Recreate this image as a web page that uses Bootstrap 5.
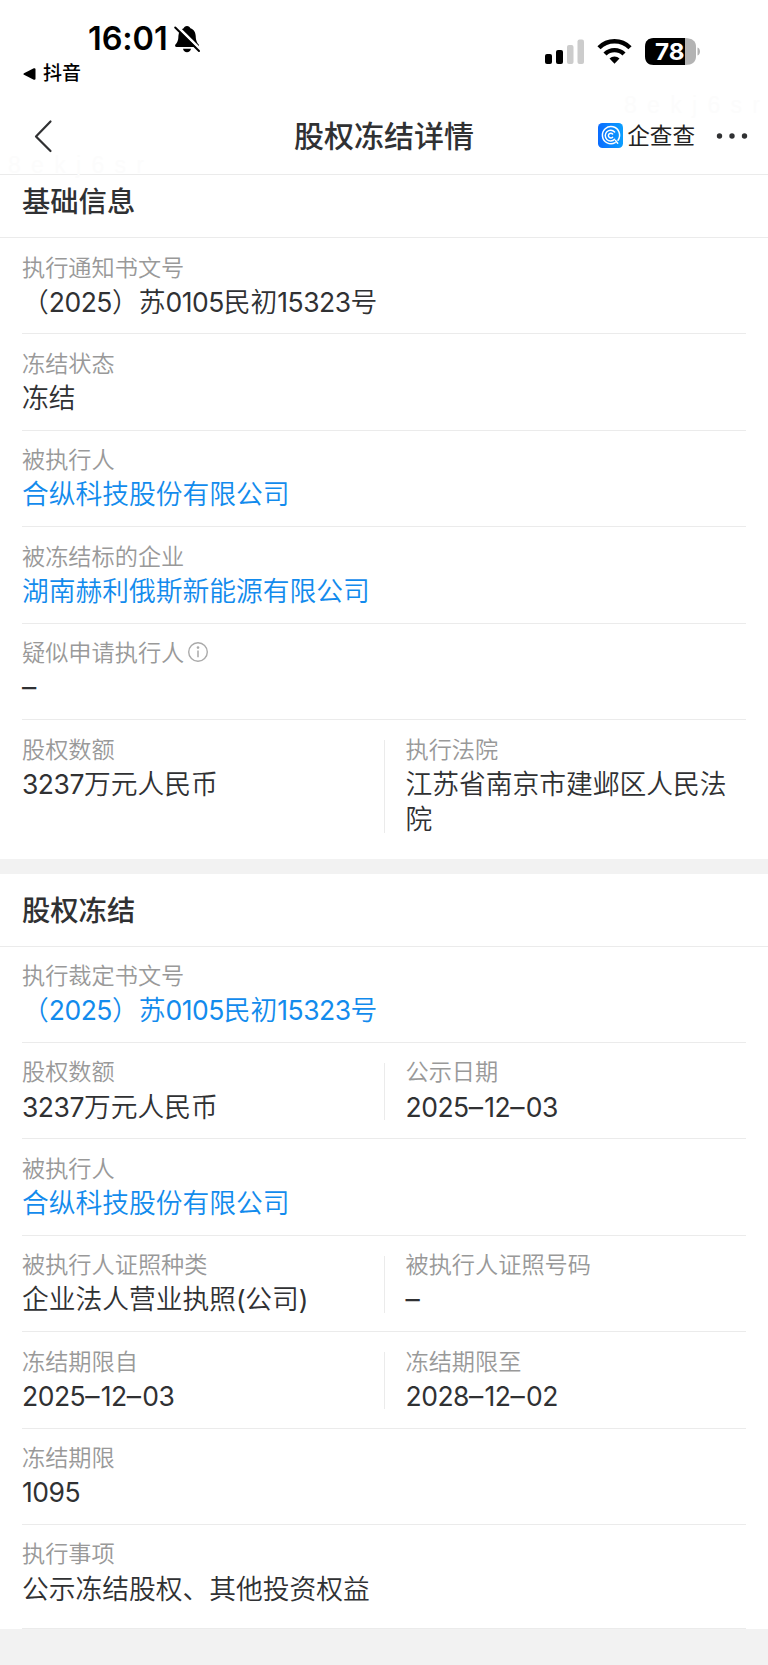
<!DOCTYPE html>
<html lang="zh-CN">
<head>
<meta charset="utf-8">
<meta name="viewport" content="width=device-width, initial-scale=1">
<title>股权冻结详情</title>
<link href="https://cdn.jsdelivr.net/npm/bootstrap@5.3.0/dist/css/bootstrap.min.css" rel="stylesheet">
<style>
  body { font-family: Inter, "Noto Sans CJK SC", sans-serif; color: #303133; background: #f2f2f2; }
  svg { display: block; flex: none; }
  .status-bar { height: 92px; color: #000; }
  .clock { font-size: 32.5px; font-weight: 600; line-height: 40px; letter-spacing: -.1px; padding: 19px 0 0 88px; }
  .bell { margin: 0 0 0 5px; }
  .back-app { font-size: 19px; font-weight: 500; line-height: 24px; padding: 3px 0 0 23px; }
  .status-icons { padding: 38px 68px 0 0; }
  .title-bar { height: 83px; border-bottom: 1px solid #ebebeb; padding: 0 20px 0 34px; }
  .page-title { font-size: 30px; font-weight: 500; line-height: 40px; top: 24px; }
  .nav-item-shift { margin-top: 5px; }
  .brand-name { font-size: 22.6px; line-height: 26px; margin: 0 21px 0 4px; color: #222; }
  .wm { font-family: "Liberation Sans", sans-serif; font-size: 23px; line-height: 26px; letter-spacing: 10.300px; color: #fcfcfc; }
  .wm-left { left: 8px; top: 152px; }
  .wm-right { left: 624px; top: 92px; }
  .sec-head { border-bottom: 1px solid #ebebeb; padding-left: 22px; font-size: 28.3px; font-weight: 500; line-height: 36px; height: 73px; padding-top: 19px; }
  .sec-head.tucked { height: 63px; padding-top: 9px; }
  .entries { padding: 0 22px; }
  .entry { height: 96.42px; border-bottom: 1px solid #ebebeb; }
  .entry.tall { height: 139px; border-bottom: 0; }
  .entry.final { height: 104px; }
  .cell { flex: 0 0 50%; padding-top: 13.500px; }
  .cell + .cell { padding-left: 21.500px; position: relative; }
  .cell + .cell::before { content: ""; position: absolute; left: 0; top: 20px; bottom: 18.5px; width: 1px; background: #ebebeb; }
  .tall .cell + .cell::before { bottom: 26px; }
  .lbl { font-size: 23.2px; line-height: 32.5px; color: #999; font-weight: 350; }
  .val { font-size: 26.75px; line-height: 35.5px; padding-top: .6px; font-weight: 350; }
  .val b { font-weight: 400; font-size: 26.5px; letter-spacing: -.5px; }
  .val i { font-style: normal; font-size: 28.500px; line-height: 1; letter-spacing: 1.300px; }
  .val.lk { color: #128bed; }
  .gap-band { height: 14.5px; background: #f2f2f2; }
</style>
</head>
<body>
<div class="bg-white position-relative">
  <div class="status-bar d-flex justify-content-between">
    <div>
      <div class="clock d-flex align-items-center"><span>16:01</span>
        <svg class="bell" width="28" height="30" viewBox="0 0 28 30">
          <path d="M14 2c1.800 0 3 1 3.400 2.300C21 5.500 22.500 8.500 22.700 12c.2 5 1.300 6.500 2.800 8.300.9 1.200.6 2.700-1 2.700H3.600c-1.600 0-2-1.500-1-2.700C4.200 18.500 5.300 17 5.400 12c.2-3.500 1.800-6.500 5.200-7.700C11 3 12.200 2 14 2zM10 24.800h8c-.4 2.200-2 3.400-4 3.400s-3.600-1.200-4-3.400z" fill="#000"/>
          <path d="M3.700 2 27.500 25.500" stroke="#fff" stroke-width="3"/>
          <path d="M2.200 3.500 26 27" stroke="#000" stroke-width="2" stroke-linecap="round"/>
        </svg>
      </div>
      <div class="back-app d-flex align-items-center">
        <svg width="14" height="14" viewBox="0 0 14 14"><path d="M1 6.200Q-.2 7 1 7.800L10.800 12.700Q12.500 13.300 12.500 11.600V2.400Q12.500.7 10.800 1.300z" fill="#000"/></svg>
        <span style="margin-left:6px">抖音</span>
      </div>
    </div>
    <div class="status-icons d-flex">
      <svg width="157" height="28" viewBox="0 0 157 28">
        <g fill="#000"><rect x="2" y="16" width="7" height="10" rx="2"/><rect x="13" y="12" width="7" height="14" rx="2"/></g>
        <g fill="#ccc"><rect x="24" y="7" width="6.500" height="19" rx="2"/><rect x="34.500" y="1.500" width="6.500" height="24.500" rx="2"/></g>
        <g fill="none" stroke="#000" stroke-width="4.400"><path d="M56 9.800a21.500 21.500 0 0 1 31 0"/><path d="M62 16a13.500 13.500 0 0 1 19 0"/></g>
        <path d="M66.500 20.500a7.500 7.500 0 0 1 10 0L71.500 25.700z" fill="#000"/>
        <path d="M110.500 0h31.500v27h-31.500c-5.500 0-8.500-3.500-8.500-8.500v-10c0-5 3-8.500 8.500-8.500z" fill="#000"/>
        <path d="M142 0c7.500 0 11 3.500 11 8.500v10c0 5-3.500 8.500-11 8.500z" fill="#b3b3b3"/>
        <path d="M154.500 9.500c3.300 1 3.300 7 0 8z" fill="#b3b3b3"/>
        <text x="112" y="22" font-size="23.500" font-weight="700" font-family="Inter, sans-serif" fill="#fff" textLength="29.500" lengthAdjust="spacingAndGlyphs">78</text>
      </svg>
    </div>
  </div>

  <nav class="title-bar d-flex align-items-center position-relative">
    <svg class="nav-item-shift" width="20" height="34" viewBox="0 0 20 34"><path d="M16.500 2.500 2 17.500 16.500 32" fill="none" stroke="#303133" stroke-width="2.200" stroke-linecap="round" stroke-linejoin="round"/></svg>
    <div class="page-title position-absolute start-0 end-0 text-center">股权冻结详情</div>
    <div class="nav-item-shift d-flex align-items-center ms-auto">
      <svg width="25" height="25" viewBox="0 0 25 25">
        <defs><linearGradient id="lg" x1="0" y1="0" x2="1" y2="0"><stop offset="0" stop-color="#0a6cff"/><stop offset="1" stop-color="#0b9fff"/></linearGradient></defs>
        <rect width="25" height="25" rx="4.500" fill="url(#lg)"/>
        <g fill="none" stroke="#fff" stroke-width="1.500" stroke-linecap="round"><path d="M17.200 19.700A8.600 8.600 0 1 1 20 17.200M17.500 17.500 19.700 20.200"/><path d="M16.600 8.900A5.400 5.400 0 1 0 16.600 16.300"/><path d="M14.600 11A2.400 2.400 0 1 0 14.600 14.200"/></g>
      </svg>
      <span class="brand-name">企查查</span>
      <svg width="32" height="8" viewBox="0 0 32 8" fill="#303133"><circle cx="3.500" cy="4" r="2.700"/><circle cx="16" cy="4" r="2.700"/><circle cx="28.500" cy="4" r="2.700"/></svg>
    </div>
  </nav>
  <div class="wm wm-left position-absolute" aria-hidden="true">8ekj6sr</div>
  <div class="wm wm-right position-absolute" aria-hidden="true">8ekj6sr</div>

  <section>
    <div class="sec-head tucked">基础信息</div>
    <div class="entries">
      <div class="entry d-flex"><div class="cell"><div class="lbl">执行通知书文号</div><div class="val text-nowrap">（<b>2025</b>）苏<b>0105</b>民初<b>15323</b>号</div></div></div>
      <div class="entry d-flex"><div class="cell"><div class="lbl">冻结状态</div><div class="val">冻结</div></div></div>
      <div class="entry d-flex"><div class="cell"><div class="lbl">被执行人</div><div class="val lk text-nowrap">合纵科技股份有限公司</div></div></div>
      <div class="entry d-flex"><div class="cell"><div class="lbl">被冻结标的企业</div><div class="val lk text-nowrap">湖南赫利俄斯新能源有限公司</div></div></div>
      <div class="entry d-flex"><div class="cell"><div class="lbl d-flex align-items-center">疑似申请执行人<svg width="22" height="22" viewBox="0 0 22 22" style="margin:-2px 0 0 3px"><circle cx="11" cy="11" r="9.300" fill="none" stroke="#aaa" stroke-width="1.400"/><circle cx="11" cy="6.600" r="1.300" fill="#aaa"/><path d="M11 9.500v6.800" stroke="#aaa" stroke-width="1.500"/></svg></div><div class="val"><b><i>–</i></b></div></div></div>
      <div class="entry tall d-flex">
        <div class="cell"><div class="lbl">股权数额</div><div class="val"><b>3237</b>万元人民币</div></div>
        <div class="cell"><div class="lbl">执行法院</div><div class="val">江苏省南京市建邺区人民法院</div></div>
      </div>
    </div>
  </section>

  <div class="gap-band"></div>

  <section>
    <div class="sec-head">股权冻结</div>
    <div class="entries">
      <div class="entry d-flex"><div class="cell"><div class="lbl">执行裁定书文号</div><div class="val lk text-nowrap">（<b>2025</b>）苏<b>0105</b>民初<b>15323</b>号</div></div></div>
      <div class="entry d-flex">
        <div class="cell"><div class="lbl">股权数额</div><div class="val"><b>3237</b>万元人民币</div></div>
        <div class="cell"><div class="lbl">公示日期</div><div class="val"><b>2025<i>–</i>12<i>–</i>03</b></div></div>
      </div>
      <div class="entry d-flex"><div class="cell"><div class="lbl">被执行人</div><div class="val lk text-nowrap">合纵科技股份有限公司</div></div></div>
      <div class="entry d-flex">
        <div class="cell"><div class="lbl">被执行人证照种类</div><div class="val">企业法人营业执照<b>(</b>公司<b>)</b></div></div>
        <div class="cell"><div class="lbl">被执行人证照号码</div><div class="val"><b><i>–</i></b></div></div>
      </div>
      <div class="entry d-flex">
        <div class="cell"><div class="lbl">冻结期限自</div><div class="val"><b>2025<i>–</i>12<i>–</i>03</b></div></div>
        <div class="cell"><div class="lbl">冻结期限至</div><div class="val"><b>2028<i>–</i>12<i>–</i>02</b></div></div>
      </div>
      <div class="entry d-flex"><div class="cell"><div class="lbl">冻结期限</div><div class="val"><b>1095</b></div></div></div>
      <div class="entry final d-flex"><div class="cell"><div class="lbl">执行事项</div><div class="val text-nowrap">公示冻结股权、其他投资权益</div></div></div>
    </div>
  </section>
</div>
<script src="https://cdn.jsdelivr.net/npm/bootstrap@5.3.0/dist/js/bootstrap.bundle.min.js"></script>
</body>
</html>
